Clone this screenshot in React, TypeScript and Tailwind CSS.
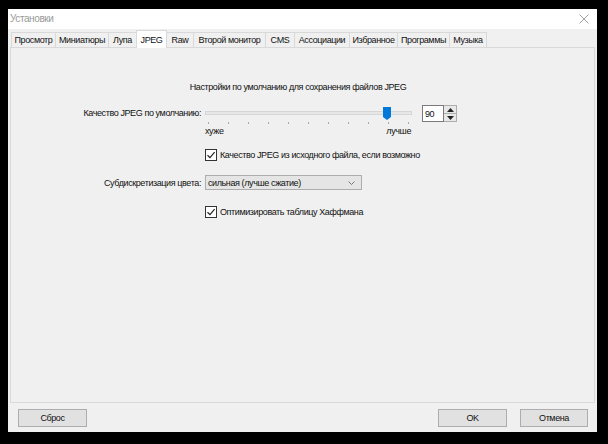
import React from 'react';

const tabs = [
  { name: 'Просмотр', w: 'w-[45px]' },
  { name: 'Миниатюры', w: 'w-[54px]' },
  { name: 'Лупа', w: 'w-[29px]' },
  { name: 'JPEG', w: 'w-[31px]', active: true },
  { name: 'Raw', w: 'w-[28px]' },
  { name: 'Второй монитор', w: 'w-[73px]' },
  { name: 'CMS', w: 'w-[30px]' },
  { name: 'Ассоциации', w: 'w-[56px]' },
  { name: 'Избранное', w: 'w-[49px]' },
  { name: 'Программы', w: 'w-[53px]' },
  { name: 'Музыка', w: 'w-[38px]' },
];

function Check() {
  return (
    <div className="w-[12px] h-[12px] border border-[#333] bg-white flex items-center justify-center shrink-0">
      <svg width="10" height="10" viewBox="0 0 10 10">
        <path d="M1.5 5.2 L4 7.6 L8.6 2.2" fill="none" stroke="#222" strokeWidth="1.2" />
      </svg>
    </div>
  );
}

function Btn({ label, w }: { label: string; w: string }) {
  return (
    <div className={`${w} h-[18px] bg-[#e1e1e1] border border-[#adadad] flex items-center justify-center`}>
      {label}
    </div>
  );
}

export default function App() {
  const ticks = Array.from({ length: 11 });

  return (
    <div className="w-[608px] h-[444px] bg-black pt-[9px] pl-[8px] pr-[11px] pb-[12px] font-['Liberation_Sans',Arial,sans-serif] text-[9px] tracking-[-0.4px] leading-[14px] text-[#111]">
      <div className="flex h-full flex-col bg-[#f0f0f0]">
        {/* title bar */}
        <div className="h-[20px] shrink-0 bg-white flex items-center justify-between pl-[2px] pr-[8px]">
          <span className="text-[#9a9a9a] text-[10px]">Установки</span>
          <svg width="10" height="10" viewBox="0 0 10 10">
            <path d="M0.5 0.5 L9.5 9.5 M9.5 0.5 L0.5 9.5" stroke="#a0a0a0" strokeWidth="1" />
          </svg>
        </div>

        {/* tabs */}
        <div className="h-[18px] shrink-0 flex items-end pl-[3px] relative z-10">
          {tabs.map((t) => (
            <div
              key={t.name}
              className={
                t.active
                  ? `${t.w} h-[18px] -mb-px -ml-px bg-white border border-b-0 border-[#d9d9d9] flex items-center justify-center whitespace-nowrap`
                  : `${t.w} h-[15px] -ml-px first:ml-0 bg-[#f0f0f0] border border-b-0 border-[#d9d9d9] flex items-center justify-center whitespace-nowrap`
              }
            >
              {t.name}
            </div>
          ))}
        </div>

        {/* panel */}
        <div className="mx-[2px] flex-1 border border-[#d9d9d9] bg-[#f0f0f0] flex flex-col whitespace-nowrap">
          <div className="pt-[32px] flex justify-center pr-[9px]">
            Настройки по умолчанию для сохранения файлов JPEG
          </div>

          <div className="mt-[11px] flex items-start">
            <div className="w-[190px] mt-px text-right">Качество JPEG по умолчанию:</div>
            <div className="ml-[4px] w-[207px] flex flex-col">
              <div className="h-[16px] relative">
                <div className="absolute left-0 right-0 top-[6px] h-[4px] bg-[#e7e7e7] border border-[#d6d6d6]" />
                <svg className="absolute left-[178px] top-[2px]" width="8" height="13" viewBox="0 0 8 13">
                  <path d="M0 0 H8 V10 L4 13 L0 10 Z" fill="#0078d7" />
                </svg>
              </div>
              <div className="h-[3px] flex justify-between px-[3px] pt-[1px]">
                {ticks.map((_, i) => (
                  <div key={i} className="w-px h-[2px] bg-[#a8a8a8]" />
                ))}
              </div>
              <div className="flex justify-between pr-px">
                <span>хуже</span>
                <span>лучше</span>
              </div>
            </div>
            <div className="ml-[10px] flex">
              <div className="w-[22px] h-[17px] bg-white border border-[#7a7a7a] pl-[2px] flex items-center">90</div>
              <div className="w-[13px] h-[17px] flex flex-col">
                <div className="flex-1 bg-[#e8e8e8] border border-l-0 border-[#adadad] flex items-center justify-center">
                  <svg width="7" height="4" viewBox="0 0 7 4"><path d="M0 4 L3.5 0 L7 4 Z" fill="#222" /></svg>
                </div>
                <div className="flex-1 bg-[#e8e8e8] border border-l-0 border-t-0 border-[#adadad] flex items-center justify-center">
                  <svg width="7" height="4" viewBox="0 0 7 4"><path d="M0 0 L3.5 4 L7 0 Z" fill="#222" /></svg>
                </div>
              </div>
            </div>
          </div>

          <div className="mt-[10px] ml-[194px] flex items-center gap-[3px]">
            <Check />
            <span>Качество JPEG из исходного файла, если возможно</span>
          </div>

          <div className="mt-[13px] flex items-center">
            <div className="w-[190px] text-right">Субдискретизация цвета:</div>
            <div className="ml-[4px] w-[157px] h-[15px] bg-[#e5e5e5] border border-[#adadad] flex items-center justify-between pl-[2px] pr-[6px]">
              <span>сильная (лучше сжатие)</span>
              <svg width="7" height="4" viewBox="0 0 7 4">
                <path d="M0.5 0.5 L3.5 3.5 L6.5 0.5" fill="none" stroke="#777" strokeWidth="1" />
              </svg>
            </div>
          </div>

          <div className="mt-[15px] ml-[194px] flex items-center gap-[3px]">
            <Check />
            <span>Оптимизировать таблицу Хаффмана</span>
          </div>
        </div>

        {/* footer */}
        <div className="h-[29px] shrink-0 pt-[6px] pl-[10px] pr-[9px] flex items-start">
          <Btn label="Сброс" w="w-[69px]" />
          <div className="flex-1" />
          <Btn label="OK" w="w-[69px]" />
          <div className="w-[13px]" />
          <Btn label="Отмена" w="w-[68px]" />
        </div>
      </div>
    </div>
  );
}
